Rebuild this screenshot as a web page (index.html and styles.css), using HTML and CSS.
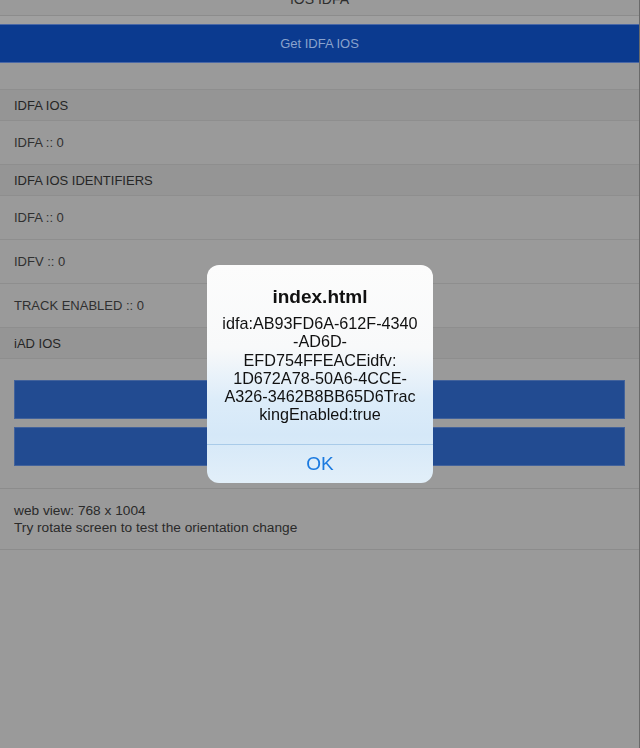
FILE: index.html
```html
<!DOCTYPE html>
<html>
<head>
<meta charset="utf-8">
<title>IOS IDFA</title>
<link rel="stylesheet" href="styles.css">
</head>
<body>
<div class="page">
  <div class="topbar"><span class="topbar-title">IOS IDFA</span></div>
  <div class="spacer"></div>
  <div class="main-btn">Get IDFA IOS</div>
  <div class="gap"></div>
  <div class="list">
    <div class="head">IDFA IOS</div>
    <div class="row">IDFA :: 0</div>
    <div class="head">IDFA IOS IDENTIFIERS</div>
    <div class="row">IDFA :: 0</div>
    <div class="row">IDFV :: 0</div>
    <div class="row">TRACK ENABLED :: 0</div>
    <div class="head">iAD IOS</div>
    <div class="btns">
      <div class="blue-btn"></div>
      <div class="blue-btn"></div>
    </div>
    <div class="info">
      <div>web view: 768 x 1004</div>
      <div>Try rotate screen to test the orientation change</div>
    </div>
  </div>
</div>
<div class="overlay">
  <div class="alert">
    <div class="alert-body">
      <div class="alert-title">index.html</div>
      <div class="alert-msg">idfa:AB93FD6A-612F-4340<br>-AD6D-<br>EFD754FFEACEidfv:<br>1D672A78-50A6-4CCE-<br>A326-3462B8BB65D6Trac<br>kingEnabled:true</div>
    </div>
    <div class="alert-btn">OK</div>
  </div>
</div>
</body>
</html>
```

FILE: styles.css
```css
html, body {
  margin: 0;
  padding: 0;
  background: #9a9a9a;
  font-family: "Liberation Sans", Arial, sans-serif;
  color: #262626;
}
.page {
  width: 639px;
  min-height: 748px;
  border-right: 1px solid #6a6a6a;
  overflow: hidden;
}
.topbar {
  height: 15px;
  border-bottom: 1px solid #8c8c8c;
  display: flex;
  justify-content: center;
  overflow: hidden;
}
.topbar-title {
  font-size: 14px;
  line-height: 16px;
  margin-top: -9px;
  color: #2e2e2e;
}
.spacer {
  height: 8px;
  background: #a0a0a0;
}
.main-btn {
  height: 37px;
  background: #0b3a8f;
  border-top: 1px solid #4a68a6;
  border-bottom: 1px solid #4a68a6;
  color: #8aa2cc;
  font-size: 13px;
  display: flex;
  align-items: center;
  justify-content: center;
}
.gap {
  height: 26px;
}
.list {
  display: flex;
  flex-direction: column;
}
.head, .row {
  border-top: 1px solid #8e8e8e;
  padding-left: 14px;
  font-size: 13px;
  display: flex;
  align-items: center;
}
.head {
  height: 30px;
  background: #959595;
}
.row {
  height: 43px;
  color: #303030;
}
.btns {
  border-top: 1px solid #8e8e8e;
  padding: 21px 14px 22px 14px;
  display: flex;
  flex-direction: column;
  gap: 8px;
}
.blue-btn {
  height: 37px;
  background: #224b91;
  border: 1px solid #42629b;
}
.info {
  border-top: 1px solid #8c8c8c;
  border-bottom: 1px solid #8c8c8c;
  padding: 13px 14px 13px 14px;
  font-size: 13.7px;
  line-height: 17px;
  color: #2a2a2a;
}
.overlay {
  position: fixed;
  inset: 0;
  display: flex;
  align-items: center;
  justify-content: center;
}
.alert {
  width: 226px;
  height: 218px;
  border-radius: 12px;
  overflow: hidden;
  background: linear-gradient(to bottom, #fcfcfc 0%, #f8f9fa 38%, #dcecf9 62%, #d5e8f8 78%, #e2eff9 100%);
  display: flex;
  flex-direction: column;
}
.alert-body {
  height: 180px;
  border-bottom: 1px solid #a9cbe9;
  padding-top: 21px;
  box-sizing: border-box;
  text-align: center;
}
.alert-title {
  font-size: 19px;
  font-weight: bold;
  line-height: 22px;
  color: #111;
}
.alert-msg {
  margin-top: 6px;
  font-size: 16.2px;
  line-height: 18.3px;
  color: #111;
}
.alert-btn {
  flex: 1;
  display: flex;
  align-items: center;
  justify-content: center;
  font-size: 19px;
  color: #1b7ae0;
}
```
